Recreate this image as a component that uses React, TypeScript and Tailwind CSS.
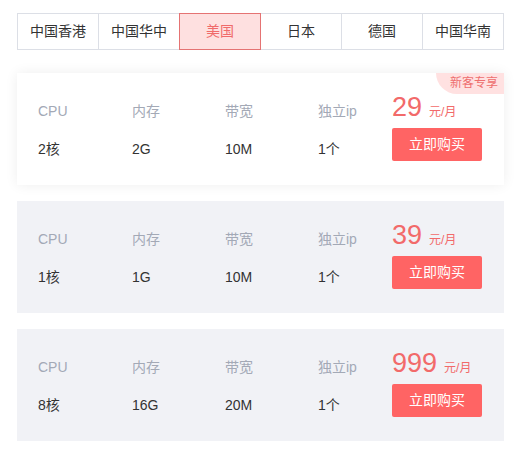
import React from "react";

const tabs = ["中国香港", "中国华中", "美国", "日本", "德国", "中国华南"];

const plans = [
  { cpu: "2核", mem: "2G", bw: "10M", ip: "1个", price: "29", badge: true },
  { cpu: "1核", mem: "1G", bw: "10M", ip: "1个", price: "39", badge: false },
  { cpu: "8核", mem: "16G", bw: "20M", ip: "1个", price: "999", badge: false },
];

function Col({ label, value, w }: { label: string; value: string; w: string }) {
  return (
    <div className={`${w} flex flex-col pt-[28px]`}>
      <div className="h-[20px] leading-[20px] text-[14px] text-[#a3a9b6]">{label}</div>
      <div className="h-[20px] leading-[20px] text-[14px] text-[#333333] mt-[18px]">{value}</div>
    </div>
  );
}

export default function App() {
  return (
    <div
      className="w-[519px] h-[452px] bg-white pt-[13px] pl-[17px] pr-[15px]"
      style={{ fontFamily: '"Liberation Sans", Arial, "Noto Sans CJK SC", sans-serif' }}
    >
      <div className="flex w-[487px] h-[37px] border border-[#dcdfe6] bg-white">
        {tabs.map((t, i) => {
          const active = i === 2;
          return (
            <div
              key={t}
              className={
                active
                  ? "flex-1 flex items-center justify-center text-[14px] text-[#f06a6a] bg-[#fee0e0] border border-[#e57373] -my-px"
                  : i < 5 && i !== 1
                  ? "flex-1 flex items-center justify-center text-[14px] text-[#333333] border-r border-[#dcdfe6]"
                  : "flex-1 flex items-center justify-center text-[14px] text-[#333333]"
              }
            >
              {t}
            </div>
          );
        })}
      </div>

      <div className="flex flex-col gap-[16px] mt-[23px]">
        {plans.map((p, i) => (
          <div
            key={i}
            className={
              i === 0
                ? "relative flex h-[112px] pl-[21px] bg-white shadow-[0_0_12px_rgba(0,0,0,0.07)]"
                : "relative flex h-[112px] pl-[21px] bg-[#f1f2f6]"
            }
          >
            {p.badge && (
              <div className="absolute right-0 top-0 w-[68px] h-[21px] rounded-bl-[21px] bg-[#ffe1e1] text-[12px] leading-[21px] text-[#ee6e6e] pl-[14px]">
                新客专享
              </div>
            )}
            <Col label="CPU" value={p.cpu} w="w-[94px]" />
            <Col label="内存" value={p.mem} w="w-[93px]" />
            <Col label="带宽" value={p.bw} w="w-[93px]" />
            <Col label="独立ip" value={p.ip} w="w-[74px]" />
            <div className="w-[90px] flex flex-col pt-[19px]">
              <div className="h-[30px] leading-[30px] flex items-baseline text-[#f26a6a]">
                <span className="text-[27px]">{p.price}</span>
                <span className="text-[12px] ml-[7px]">元/月</span>
              </div>
              <button className="mt-[6px] w-[90px] h-[33px] rounded-[2px] bg-[#ff6464] text-white text-[14px] flex items-center justify-center">
                立即购买
              </button>
            </div>
          </div>
        ))}
      </div>
    </div>
  );
}
